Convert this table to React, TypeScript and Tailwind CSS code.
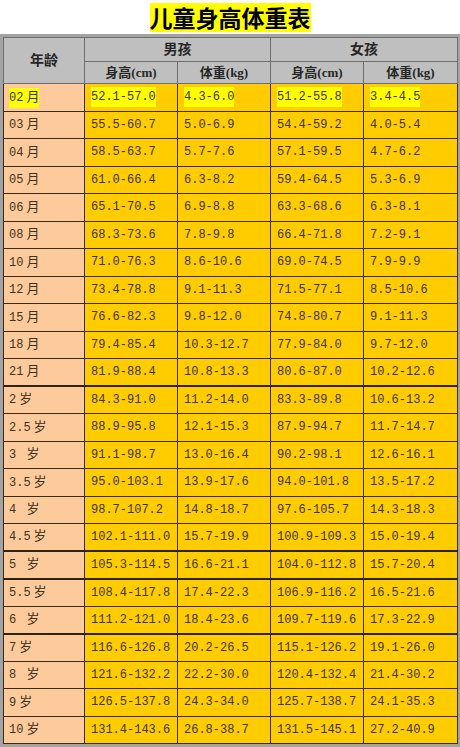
import React from "react";

const rows: string[][] = [
  ["02月", "52.1-57.0", "4.3-6.0", "51.2-55.8", "3.4-4.5"],
  ["03月", "55.5-60.7", "5.0-6.9", "54.4-59.2", "4.0-5.4"],
  ["04月", "58.5-63.7", "5.7-7.6", "57.1-59.5", "4.7-6.2"],
  ["05月", "61.0-66.4", "6.3-8.2", "59.4-64.5", "5.3-6.9"],
  ["06月", "65.1-70.5", "6.9-8.8", "63.3-68.6", "6.3-8.1"],
  ["08月", "68.3-73.6", "7.8-9.8", "66.4-71.8", "7.2-9.1"],
  ["10月", "71.0-76.3", "8.6-10.6", "69.0-74.5", "7.9-9.9"],
  ["12月", "73.4-78.8", "9.1-11.3", "71.5-77.1", "8.5-10.6"],
  ["15月", "76.6-82.3", "9.8-12.0", "74.8-80.7", "9.1-11.3"],
  ["18月", "79.4-85.4", "10.3-12.7", "77.9-84.0", "9.7-12.0"],
  ["21月", "81.9-88.4", "10.8-13.3", "80.6-87.0", "10.2-12.6"],
  ["2岁", "84.3-91.0", "11.2-14.0", "83.3-89.8", "10.6-13.2"],
  ["2.5岁", "88.9-95.8", "12.1-15.3", "87.9-94.7", "11.7-14.7"],
  ["3 岁", "91.1-98.7", "13.0-16.4", "90.2-98.1", "12.6-16.1"],
  ["3.5岁", "95.0-103.1", "13.9-17.6", "94.0-101.8", "13.5-17.2"],
  ["4 岁", "98.7-107.2", "14.8-18.7", "97.6-105.7", "14.3-18.3"],
  ["4.5岁", "102.1-111.0", "15.7-19.9", "100.9-109.3", "15.0-19.4"],
  ["5 岁", "105.3-114.5", "16.6-21.1", "104.0-112.8", "15.7-20.4"],
  ["5.5岁", "108.4-117.8", "17.4-22.3", "106.9-116.2", "16.5-21.6"],
  ["6 岁", "111.2-121.0", "18.4-23.6", "109.7-119.6", "17.3-22.9"],
  ["7岁", "116.6-126.8", "20.2-26.5", "115.1-126.2", "19.1-26.0"],
  ["8 岁", "121.6-132.2", "22.2-30.0", "120.4-132.4", "21.4-30.2"],
  ["9岁", "126.5-137.8", "24.3-34.0", "125.7-138.7", "24.1-35.3"],
  ["10岁", "131.4-143.6", "26.8-38.7", "131.5-145.1", "27.2-40.9"],
];

// rows whose bottom line is drawn heavier in the sheet
const thick = new Set([10, 16, 17, 19]);

function Age({ label }: { label: string }) {
  const unit = label.slice(-1);
  return (
    <>
      {label.slice(0, -1)}
      <span className="ml-[3px] text-[13px]">{unit}</span>
    </>
  );
}

export default function App() {
  return (
    <div className="w-[460px] h-[747px] bg-white text-[#3d3420] overflow-hidden">
      <div className="flex justify-center pt-[3px]">
        <h1 className="bg-[#ffff00] text-[23px] leading-[29px] font-bold text-black font-['Noto_Sans_CJK_SC',sans-serif]">
          儿童身高体重表
        </h1>
      </div>

      <div className="mt-[2px] border-[3px] border-[#a3a3a3]">
        <table className="w-full table-fixed border-collapse font-['Liberation_Mono','Noto_Sans_CJK_SC',monospace] text-[12px]">
          <colgroup>
            <col className="w-[81px]" />
            <col className="w-[93px]" />
            <col className="w-[93px]" />
            <col className="w-[93px]" />
            <col className="w-[94px]" />
          </colgroup>
          <thead className="bg-[#bfbfbf] text-[#262626] font-['Liberation_Serif','Noto_Sans_CJK_SC',serif]">
            <tr className="h-[24px]">
              <th rowSpan={2} className="border border-[#6e6e6e] text-[14px] font-bold">
                年龄
              </th>
              <th colSpan={2} className="border border-[#6e6e6e] text-[14px] font-bold">
                男孩
              </th>
              <th colSpan={2} className="border border-[#6e6e6e] text-[14px] font-bold">
                女孩
              </th>
            </tr>
            <tr className="h-[22px]">
              {["身高(cm)", "体重(kg)", "身高(cm)", "体重(kg)"].map((h, i) => (
                <th key={i} className="border border-[#6e6e6e] text-[13px] font-bold">
                  {h}
                </th>
              ))}
            </tr>
          </thead>
          <tbody>
            {rows.map((r, i) => (
              <tr
                key={i}
                className={
                  thick.has(i)
                    ? "h-[27.5px] border-b-2 border-[#2e2210]"
                    : "h-[27.5px]"
                }
              >
                {r.map((c, j) => (
                  <td
                    key={j}
                    className={
                      (j === 0 ? "bg-[#fdca9c] pl-[5px]" : "bg-[#ffcc00] pl-[6px]") +
                      " border border-[#3b2c16] whitespace-pre p-0 align-middle"
                    }
                  >
                    {i === 0 ? (
                      <span className="bg-[#ffff00] py-[3px]">
                        {j === 0 ? <Age label={c} /> : c}
                      </span>
                    ) : j === 0 ? (
                      <Age label={c} />
                    ) : (
                      c
                    )}
                  </td>
                ))}
              </tr>
            ))}
          </tbody>
        </table>
      </div>
    </div>
  );
}
